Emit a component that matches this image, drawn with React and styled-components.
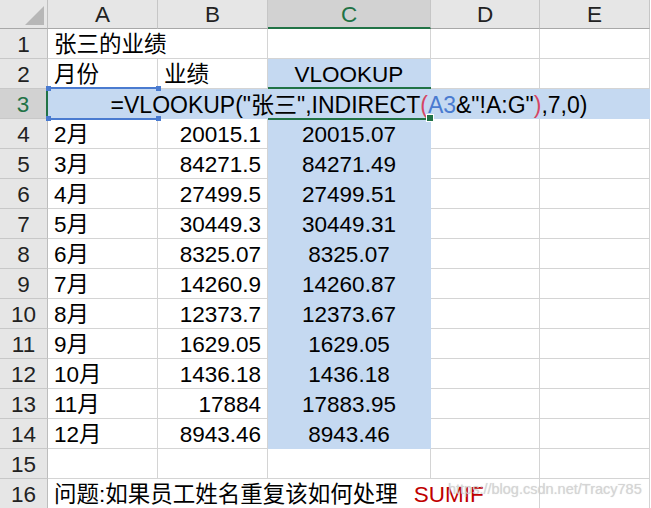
import React from "react";
import styled, { createGlobalStyle } from "styled-components";

const Global = createGlobalStyle`
  html, body { margin: 0; padding: 0; background: #ffffff; }
  body { font-family: "Liberation Sans", "Noto Sans CJK SC", sans-serif; }
`;

const GRID = "#d4d4d4";
const SEL = "#c5d9f1";
const GREEN = "#217346";
const REF_BLUE = "#4a7bd0";

const Sheet = styled.div`
  position: relative;
  display: grid;
  grid-template-columns: 48px 110px 110px 163px 109px 110px;
  grid-template-rows: 29px repeat(16, 30px);
  width: 650px;
  font-family: "Liberation Sans", "Noto Sans CJK SC", sans-serif;
  font-size: 22.5px;
  line-height: 24px;
  color: #000;
`;

const Corner = styled.div`
  position: relative;
  grid-row: 1;
  grid-column: 1;
  background: #e6e6e6;
  border-right: 1px solid #c0c0c0;
  border-bottom: 1px solid #a8a8a8;
  box-sizing: border-box;
  &::after {
    content: "";
    position: absolute;
    right: 3px;
    bottom: 3px;
    width: 0;
    height: 0;
    border-left: 19px solid transparent;
    border-bottom: 19px solid #b7b7b7;
  }
`;

const ColHeader = styled.div`
  grid-row: 1;
  grid-column: ${(p) => p.$col};
  box-sizing: border-box;
  display: flex;
  align-items: center;
  justify-content: center;
  padding-top: 2px;
  background: ${(p) => (p.$active ? "#d2d2d2" : "#e6e6e6")};
  color: ${(p) => (p.$active ? GREEN : "#222")};
  border-right: 1px solid #c6c6c6;
  border-bottom: ${(p) => (p.$active ? `2px solid ${GREEN}` : "1px solid #a8a8a8")};
`;

const RowHeader = styled.div`
  grid-row: ${(p) => p.$row};
  grid-column: 1;
  box-sizing: border-box;
  display: flex;
  align-items: center;
  justify-content: center;
  padding-top: 2px;
  background: ${(p) => (p.$active ? "#d2d2d2" : "#e6e6e6")};
  color: ${(p) => (p.$active ? GREEN : "#222")};
  border-right: ${(p) => (p.$active ? `2px solid ${GREEN}` : "1px solid #bdbdbd")};
  border-bottom: 1px solid #c8c8c8;
`;

const Cell = styled.div`
  grid-row: ${(p) => p.$row};
  grid-column: ${(p) => p.$col};
  box-sizing: border-box;
  display: flex;
  align-items: center;
  justify-content: ${(p) =>
    p.$align === "right" ? "flex-end" : p.$align === "center" ? "center" : "flex-start"};
  padding: 2px 6px 0 6px;
  white-space: nowrap;
  overflow: visible;
  background: ${(p) => (p.$sel ? SEL : "#fff")};
  border-right: 1px solid ${(p) => (p.$sel ? SEL : GRID)};
  border-bottom: 1px solid ${(p) => (p.$sel ? SEL : GRID)};
`;

const FormulaCell = styled.div`
  grid-row: 4;
  grid-column: 2 / 7;
  box-sizing: border-box;
  display: flex;
  align-items: center;
  justify-content: center;
  padding-top: 2px;
  font-size: 23px;
  white-space: nowrap;
  background: ${SEL};
  border-bottom: 1px solid ${SEL};
`;

const Tok = styled.span`
  color: ${(p) => p.$color || "#000"};
`;

const RefFrame = styled.div`
  position: relative;
  grid-row: 4;
  grid-column: 2;
  margin: -2px 0 -1px 0;
  border-top: 2px solid ${REF_BLUE};
  border-bottom: 2px solid ${REF_BLUE};
  pointer-events: none;
`;

const Handle = styled.span`
  position: absolute;
  width: 5px;
  height: 5px;
  background: ${REF_BLUE};
  ${(p) => (p.$top ? "top: -3px;" : "bottom: -3px;")}
  ${(p) => (p.$left ? "left: -2px;" : "right: -3px;")}
`;

const ActiveFrame = styled.div`
  position: relative;
  grid-row: 4;
  grid-column: 4;
  margin: -2px 0 -1px 0;
  border-top: 2px solid ${GREEN};
  border-bottom: 2px solid ${GREEN};
  pointer-events: none;
`;

const FillHandle = styled.span`
  position: absolute;
  right: -3px;
  bottom: -4px;
  width: 6px;
  height: 6px;
  background: ${GREEN};
  border: 1px solid #fff;
`;

const Red = styled.span`
  color: #c00000;
  margin-left: 16px;
`;

const Watermark = styled.div`
  position: absolute;
  left: 448px;
  top: 482px;
  font-family: "Liberation Sans", sans-serif;
  font-size: 14.5px;
  line-height: 15px;
  color: rgba(212, 212, 212, 0.9);
  text-shadow: 0 0 1px rgba(140, 140, 140, 0.35);
  pointer-events: none;
  white-space: nowrap;
`;

const COLS = ["A", "B", "C", "D", "E"];

const DATA = [
  ["2月", "20015.1", "20015.07"],
  ["3月", "84271.5", "84271.49"],
  ["4月", "27499.5", "27499.51"],
  ["5月", "30449.3", "30449.31"],
  ["6月", "8325.07", "8325.07"],
  ["7月", "14260.9", "14260.87"],
  ["8月", "12373.7", "12373.67"],
  ["9月", "1629.05", "1629.05"],
  ["10月", "1436.18", "1436.18"],
  ["11月", "17884", "17883.95"],
  ["12月", "8943.46", "8943.46"],
];

export default function App() {
  const g = (r) => r + 1; // sheet row -> grid row
  return (
    <>
      <Global />
      <Sheet>
        <Corner />
        {COLS.map((c, i) => (
          <ColHeader key={c} $col={i + 2} $active={c === "C"}>
            {c}
          </ColHeader>
        ))}
        {Array.from({ length: 16 }, (_, i) => (
          <RowHeader key={i} $row={g(i + 1)} $active={i + 1 === 3}>
            {i + 1}
          </RowHeader>
        ))}

        {/* Row 1 */}
        <Cell $row={g(1)} $col="2 / 4">张三的业绩</Cell>
        <Cell $row={g(1)} $col={4} />
        <Cell $row={g(1)} $col={5} />
        <Cell $row={g(1)} $col={6} />

        {/* Row 2 */}
        <Cell $row={g(2)} $col={2}>月份</Cell>
        <Cell $row={g(2)} $col={3}>业绩</Cell>
        <Cell $row={g(2)} $col={4} $sel $align="center">VLOOKUP</Cell>
        <Cell $row={g(2)} $col={5} />
        <Cell $row={g(2)} $col={6} />

        {/* Row 3: formula being edited */}
        <FormulaCell>
          <Tok>=VLOOKUP("张三",INDIRECT</Tok>
          <Tok $color="#d64563">(</Tok>
          <Tok $color={REF_BLUE}>A3</Tok>
          <Tok>&amp;"!A:G"</Tok>
          <Tok $color="#d64563">)</Tok>
          <Tok>,7,0)</Tok>
        </FormulaCell>
        <RefFrame>
          <Handle $top $left />
          <Handle $top />
          <Handle $left />
          <Handle />
        </RefFrame>
        <ActiveFrame>
          <FillHandle />
        </ActiveFrame>

        {/* Rows 4-14 */}
        {DATA.map((d, i) => {
          const r = g(i + 4);
          return (
            <React.Fragment key={i}>
              <Cell $row={r} $col={2}>{d[0]}</Cell>
              <Cell $row={r} $col={3} $align="right">{d[1]}</Cell>
              <Cell $row={r} $col={4} $sel $align="center">{d[2]}</Cell>
              <Cell $row={r} $col={5} />
              <Cell $row={r} $col={6} />
            </React.Fragment>
          );
        })}

        {/* Row 15 */}
        {[2, 3, 4, 5, 6].map((c) => (
          <Cell key={c} $row={g(15)} $col={c} />
        ))}

        {/* Row 16 */}
        <Cell $row={g(16)} $col="2 / 6">
          问题:如果员工姓名重复该如何处理<Red>SUMIF</Red>
        </Cell>
        <Cell $row={g(16)} $col={6} />

        <Watermark>https://blog.csdn.net/Tracy785</Watermark>
      </Sheet>
    </>
  );
}
